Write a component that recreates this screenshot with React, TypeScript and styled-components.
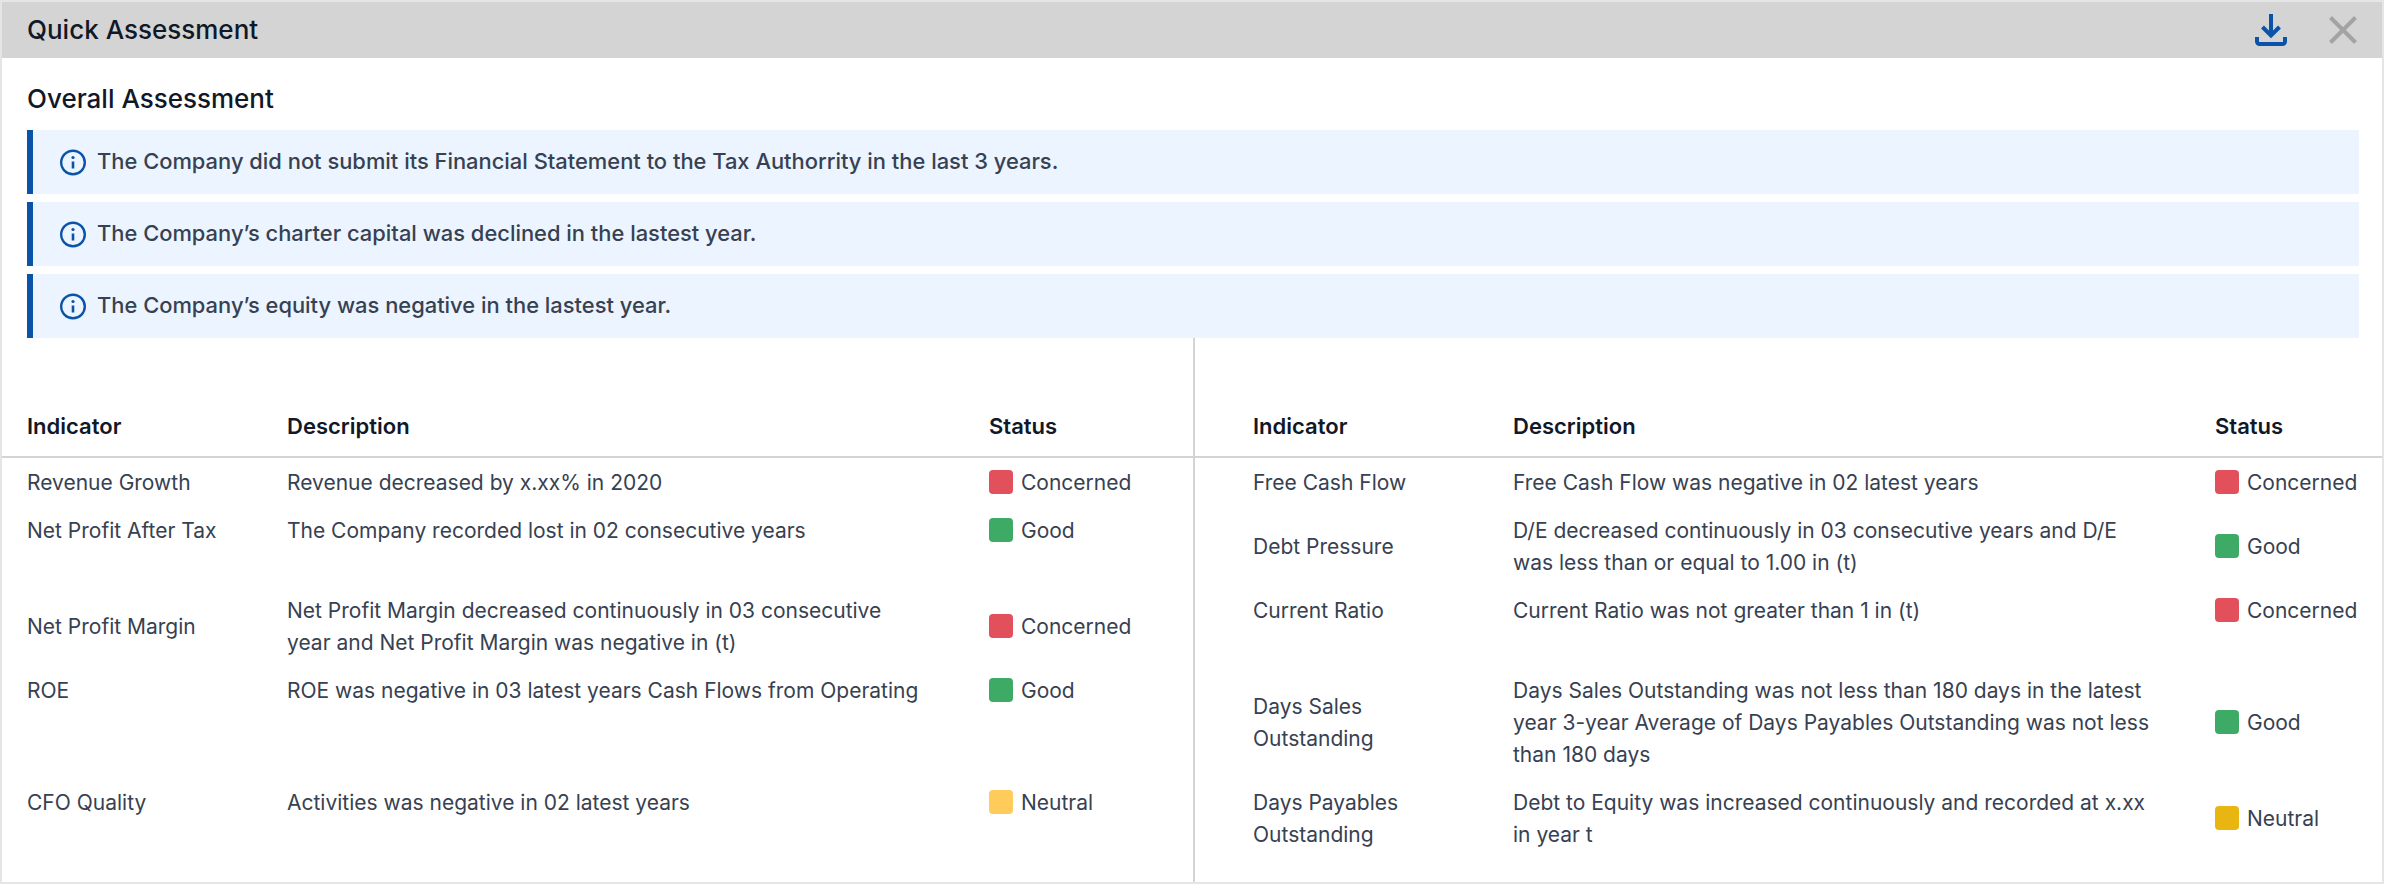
import React from "react";
import styled, { createGlobalStyle } from "styled-components";

const Global = createGlobalStyle`
  html, body { margin: 0; padding: 0; background: #fff; }
  body { font-family: Inter, "Liberation Sans", sans-serif; }
`;

const Frame = styled.div`
  box-sizing: border-box;
  width: 2384px;
  height: 884px;
  border: 2px solid #e5e5e5;
  background: #fff;
  color: #374151;
  overflow: hidden;
`;

const TitleBar = styled.header`
  height: 56px;
  background: #d4d4d4;
  display: flex;
  align-items: center;
  justify-content: space-between;
  padding: 0 25px;
`;

const Title = styled.h1`
  margin: 0;
  font-size: 26px;
  line-height: 32px;
  font-weight: 500;
  color: #111827;
`;

const Actions = styled.div`
  display: flex;
  align-items: center;
  gap: 42px;
`;

const IconGlyph = styled.svg`
  display: block;
  flex: none;
`;

const Overall = styled.section`
  padding: 25px 23px 0 25px;
`;

const SectionTitle = styled.h2`
  margin: 0 0 15px;
  font-size: 26px;
  line-height: 32px;
  font-weight: 500;
  color: #111827;
`;

const AlertList = styled.div`
  display: flex;
  flex-direction: column;
  gap: 8px;
`;

const Alert = styled.div`
  height: 64px;
  box-sizing: border-box;
  display: flex;
  align-items: center;
  gap: 11px;
  padding-left: 27px;
  background: #ebf4ff;
  border-left: 6px solid #0a53a8;
  font-size: 21.9px;
  font-weight: 500;
  line-height: 32px;
`;

const AlertText = styled.span`
  padding-bottom: 2px;
  line-height: 30px;
`;

const Tables = styled.div`
  display: grid;
  grid-template-columns: 1191px 1fr;
`;

const Panel = styled.div<{ $right?: boolean }>`
  min-width: 0;
  height: 544px;
  box-sizing: border-box;
  ${(p) => (p.$right ? "border-left: 2px solid #d4d4d4;" : "")}
`;

const Row = styled.div<{ $right?: boolean; $h: number; $align: string }>`
  display: grid;
  grid-template-columns: 260px 702px 1fr;
  box-sizing: border-box;
  min-height: ${(p) => p.$h}px;
  padding-left: ${(p) => (p.$right ? 58 : 25)}px;
  align-items: ${(p) => p.$align};
`;

const HeadRow = styled.div<{ $right?: boolean }>`
  display: grid;
  grid-template-columns: 260px 702px 1fr;
  box-sizing: border-box;
  height: 120px;
  padding: 72px 0 14px ${(p) => (p.$right ? 58 : 25)}px;
  border-bottom: 2px solid #d4d4d4;
  font-size: 22px;
  line-height: 32px;
  font-weight: 600;
  color: #111827;
`;

const Cell = styled.div`
  padding: 9px 0 7px;
  font-size: 21px;
  line-height: 32px;
`;

const IndicatorCell = styled(Cell)`
  width: 200px;
`;

const DescCell = styled(Cell)`
  width: 640px;
`;

const StatusCell = styled.div`
  display: flex;
  align-items: center;
  gap: 8px;
  padding: 8px 0;
  font-size: 21px;
  line-height: 32px;
`;

const StatusLabel = styled.span`
  padding-top: 2px;
  line-height: 30px;
`;

const Swatch = styled.span<{ $c: string }>`
  width: 24px;
  height: 24px;
  border-radius: 4px;
  background: ${(p) => p.$c};
  flex: none;
`;

const RED = "#e2505c";
const GREEN = "#3dab66";
const AMBER = "#ffcc5c";
const GOLD = "#e8b511";

type R = { i: string; d: string; s: string; c: string; h: number; a: string };

const left: R[] = [
  { i: "Revenue Growth", d: "Revenue decreased by x.xx% in 2020", s: "Concerned", c: RED, h: 48, a: "center" },
  { i: "Net Profit After Tax", d: "The Company recorded lost in 02 consecutive years", s: "Good", c: GREEN, h: 80, a: "start" },
  { i: "Net Profit Margin", d: "Net Profit Margin decreased continuously in 03 consecutive year and Net Profit Margin was negative in (t)", s: "Concerned", c: RED, h: 80, a: "center" },
  { i: "ROE", d: "ROE was negative in 03 latest years Cash Flows from Operating", s: "Good", c: GREEN, h: 112, a: "start" },
  { i: "CFO Quality", d: "Activities was negative in 02 latest years", s: "Neutral", c: AMBER, h: 80, a: "start" },
];

const right: R[] = [
  { i: "Free Cash Flow", d: "Free Cash Flow was negative in 02 latest years", s: "Concerned", c: RED, h: 48, a: "center" },
  { i: "Debt Pressure", d: "D/E decreased continuously in 03 consecutive years and D/E was less than or equal to 1.00 in (t)", s: "Good", c: GREEN, h: 80, a: "center" },
  { i: "Current Ratio", d: "Current Ratio was not greater than 1 in (t)", s: "Concerned", c: RED, h: 80, a: "start" },
  { i: "Days Sales Outstanding", d: "Days Sales Outstanding was not less than 180 days in the latest year 3-year Average of Days Payables Outstanding was not less than 180 days", s: "Good", c: GREEN, h: 112, a: "center" },
  { i: "Days Payables Outstanding", d: "Debt to Equity was increased continuously and recorded at x.xx in year t", s: "Neutral", c: GOLD, h: 80, a: "center" },
];

const alerts = [
  "The Company did not submit its Financial Statement to the Tax Authorrity in the last 3 years.",
  "The Company’s charter capital was declined in the lastest year.",
  "The Company’s equity was negative in the lastest year.",
];

const InfoIcon = () => (
  <IconGlyph width="26" height="27" viewBox="0 0 26 27" fill="none" stroke="#0a53a8" strokeWidth="2.4">
    <circle cx="13" cy="13.5" r="11.8" />
    <path d="M13 12.5v7" strokeWidth="2.6" />
    <circle cx="13" cy="8.5" r="1.6" fill="#0a53a8" stroke="none" />
  </IconGlyph>
);

const DownloadIcon = () => (
  <IconGlyph width="32" height="32" viewBox="0 0 32 32" fill="none" stroke="#0a53a8" strokeWidth="4">
    <path d="M16 0v20M7.5 13l8.5 8.5 8.5-8.5" />
    <path d="M2 23v4.5a2.5 2.5 0 0 0 2.5 2.5h23a2.5 2.5 0 0 0 2.5-2.5V23" />
  </IconGlyph>
);

const CloseIcon = () => (
  <IconGlyph width="28" height="28" viewBox="0 0 28 28" fill="none" stroke="#a3a3a3" strokeWidth="4">
    <path d="M1.5 1.5l25 25M26.5 1.5l-25 25" />
  </IconGlyph>
);

const Table = ({ rows, isRight }: { rows: R[]; isRight?: boolean }) => (
  <Panel $right={isRight}>
    <HeadRow $right={isRight}>
      <div>Indicator</div>
      <div>Description</div>
      <div>Status</div>
    </HeadRow>
    {rows.map((r) => (
      <Row key={r.i} $right={isRight} $h={r.h} $align={r.a}>
        <IndicatorCell>{r.i}</IndicatorCell>
        <DescCell>{r.d}</DescCell>
        <StatusCell>
          <Swatch $c={r.c} />
          <StatusLabel>{r.s}</StatusLabel>
        </StatusCell>
      </Row>
    ))}
  </Panel>
);

export default function App() {
  return (
    <Frame>
      <Global />
      <TitleBar>
        <Title>Quick Assessment</Title>
        <Actions>
          <DownloadIcon />
          <CloseIcon />
        </Actions>
      </TitleBar>
      <Overall>
        <SectionTitle>Overall Assessment</SectionTitle>
        <AlertList>
          {alerts.map((a) => (
            <Alert key={a}>
              <InfoIcon />
              <AlertText>{a}</AlertText>
            </Alert>
          ))}
        </AlertList>
      </Overall>
      <Tables>
        <Table rows={left} />
        <Table rows={right} isRight />
      </Tables>
    </Frame>
  );
}
